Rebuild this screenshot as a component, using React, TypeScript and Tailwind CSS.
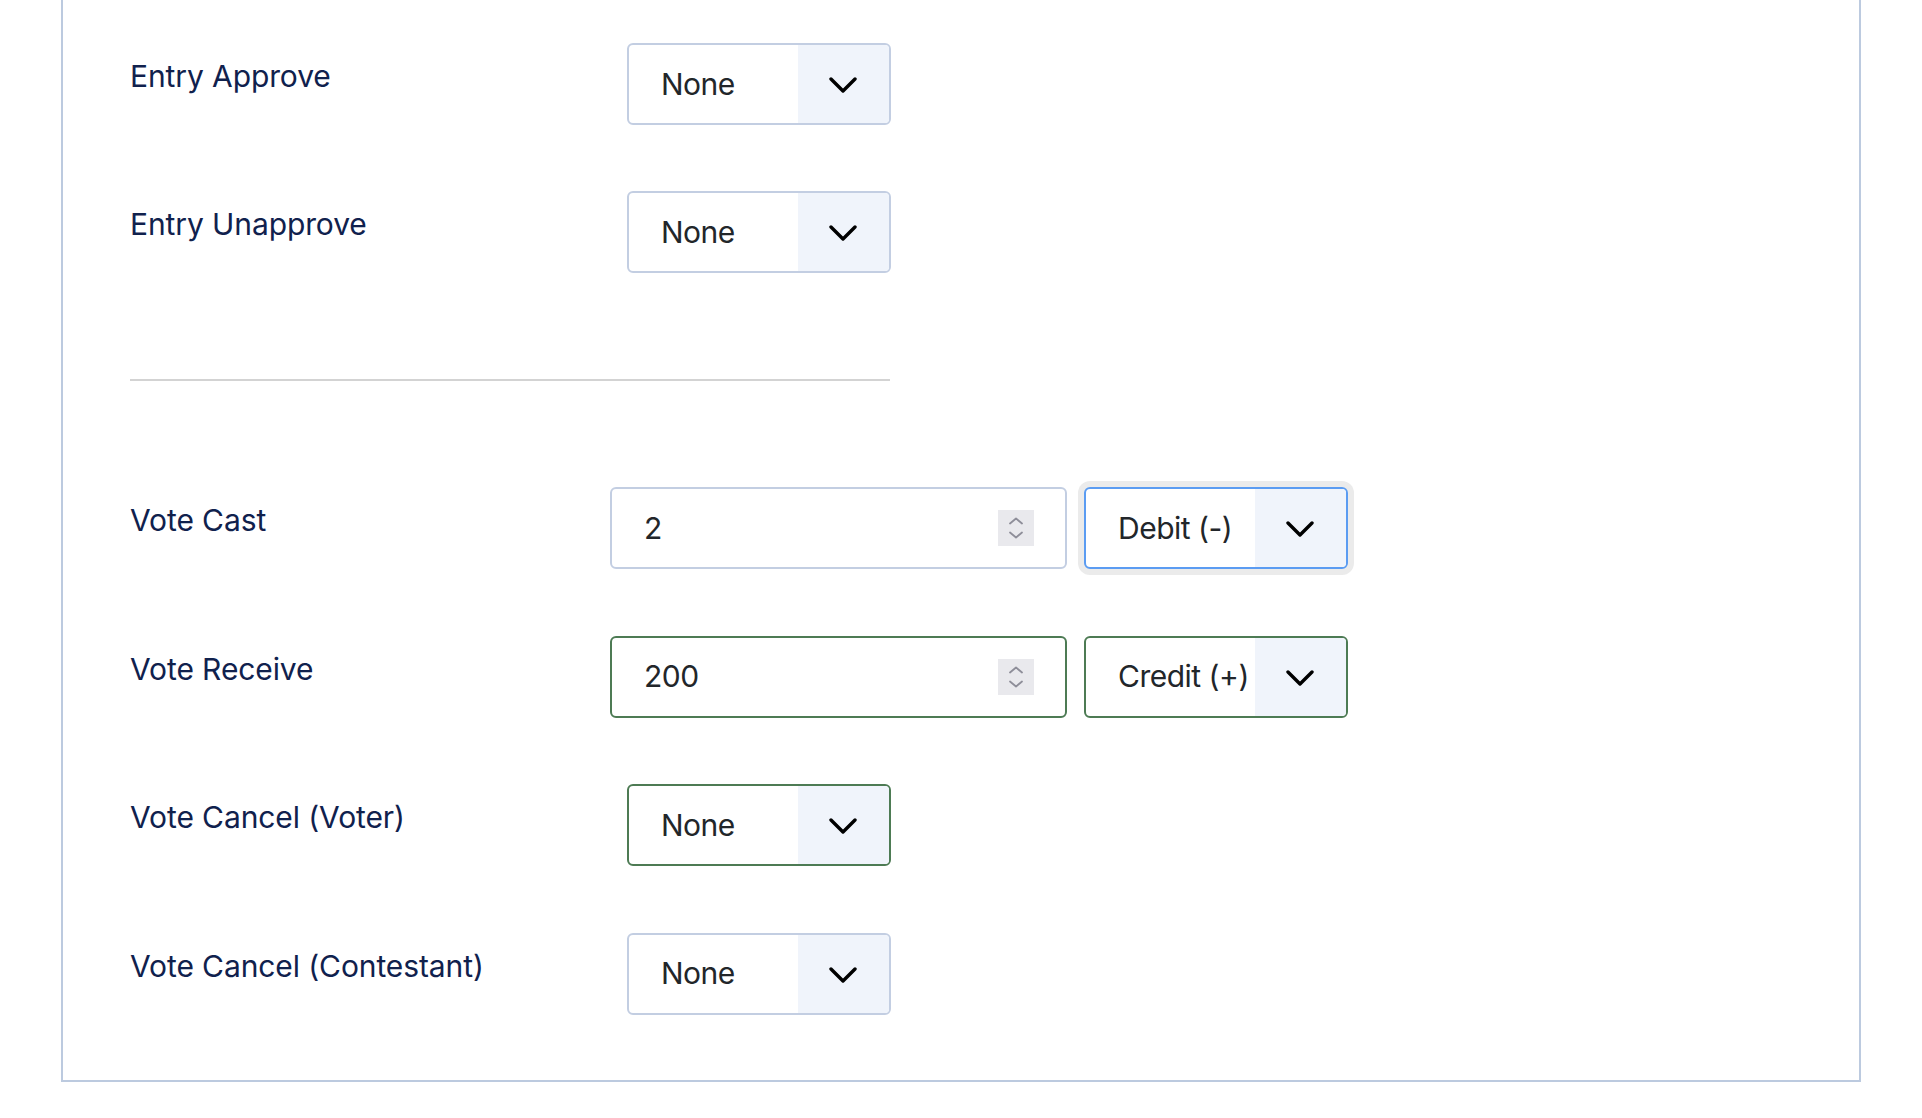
import React from "react";

type Variant = "default" | "focus" | "valid";

function Chevron() {
  return (
    <svg width="28" height="17" viewBox="0 0 28 17" fill="none">
      <polyline
        points="2,2 14,14 26,2"
        stroke="#000"
        strokeWidth="3.4"
        strokeLinecap="round"
        strokeLinejoin="round"
      />
    </svg>
  );
}

function borderFor(v: Variant) {
  if (v === "focus") return "border-[#5b9cf2] shadow-[0_0_0_6px_#ebebeb]";
  if (v === "valid") return "border-[#4d7b54]";
  return "border-[#c3cee2]";
}

function Select({ value, variant = "default" }: { value: string; variant?: Variant }) {
  return (
    <div
      className={`flex h-[82px] w-[264px] shrink-0 overflow-hidden rounded-[6px] border-2 bg-white ${borderFor(variant)}`}
    >
      <div className="flex flex-1 items-center pl-[32px] text-[30px] leading-[45px] tracking-[-0.5px] text-[#22262a]">
        {value}
      </div>
      <div className="flex w-[91px] items-center justify-center bg-[#f0f4fb] pr-[2px] pt-[3px]">
        <Chevron />
      </div>
    </div>
  );
}

function Spinner() {
  return (
    <div className="h-[36px] w-[36px] bg-[#e9e9ed]">
      <svg width="36" height="36" viewBox="0 0 36 36" fill="none">
        <path d="M12 13.5 L18 8.5 L24 13.5" stroke="#8e8e99" strokeWidth="1.8" strokeLinecap="round" strokeLinejoin="round" />
        <path d="M12 22.5 L18 27.5 L24 22.5" stroke="#8e8e99" strokeWidth="1.8" strokeLinecap="round" strokeLinejoin="round" />
      </svg>
    </div>
  );
}

function NumberInput({ value, variant = "default" }: { value: string; variant?: Variant }) {
  return (
    <div
      className={`flex h-[82px] w-[457px] shrink-0 items-center justify-between rounded-[6px] border-2 bg-white pl-[32px] pr-[31px] ${borderFor(variant)}`}
    >
      <span className="text-[30px] leading-[45px] tracking-[-0.5px] text-[#22262a]">{value}</span>
      <Spinner />
    </div>
  );
}

function Label({ children }: { children: React.ReactNode }) {
  return (
    <div className="pt-[11px] text-[30px] leading-[45px] tracking-[-0.1px] text-[#10214d]">{children}</div>
  );
}

function SelectRow({ label, value, variant }: { label: string; value: string; variant?: Variant }) {
  return (
    <div className="grid h-[82px] grid-cols-[480px_auto] items-start">
      <Label>{label}</Label>
      <div className="pl-[17px]">
        <Select value={value} variant={variant} />
      </div>
    </div>
  );
}

function PointsRow({
  label,
  amount,
  type,
  inputVariant,
  selectVariant,
}: {
  label: string;
  amount: string;
  type: string;
  inputVariant?: Variant;
  selectVariant?: Variant;
}) {
  return (
    <div className="grid h-[82px] grid-cols-[480px_auto] items-start">
      <Label>{label}</Label>
      <div className="flex gap-[17px]">
        <NumberInput value={amount} variant={inputVariant} />
        <Select value={type} variant={selectVariant} />
      </div>
    </div>
  );
}

export default function App() {
  return (
    <div className="min-h-screen bg-white font-['Inter','Liberation_Sans',sans-serif]">
      <div className="ml-[61px] w-[1800px] border-x-2 border-b-2 border-[#bccadf] pb-[65px] pl-[67px] pt-[43px]">
        <div className="flex flex-col gap-[66px]">
          <SelectRow label="Entry Approve" value="None" />
          <SelectRow label="Entry Unapprove" value="None" />
        </div>
        <div className="mt-[106px] h-[2px] w-[760px] bg-[#d3d3d3]" />
        <div className="mt-[106px] flex flex-col gap-[66.67px]">
          <PointsRow label="Vote Cast" amount="2" type="Debit (-)" selectVariant="focus" />
          <PointsRow
            label="Vote Receive"
            amount="200"
            type="Credit (+)"
            inputVariant="valid"
            selectVariant="valid"
          />
          <SelectRow label="Vote Cancel (Voter)" value="None" variant="valid" />
          <SelectRow label="Vote Cancel (Contestant)" value="None" />
        </div>
      </div>
    </div>
  );
}
